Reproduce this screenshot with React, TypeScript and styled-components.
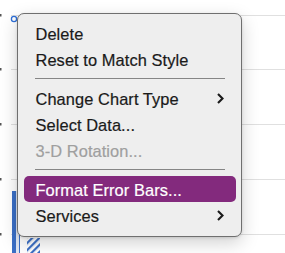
import React from "react";
import styled, { createGlobalStyle } from "styled-components";

const Global = createGlobalStyle`
  html, body { margin: 0; padding: 0; background: #ffffff; }
  body { width: 285px; height: 253px; overflow: hidden; }
`;

const Stage = styled.div`
  position: relative;
  width: 285px;
  height: 253px;
  overflow: hidden;
  background: #ffffff;
`;

const ChartSvg = styled.svg`
  display: block;
`;

const Menu = styled.div`
  position: absolute;
  left: 17px;
  top: 13px;
  width: 225px;
  height: 224px;
  box-sizing: border-box;
  padding: 6px 5px 6px 6px;
  background: #eeeeee;
  border: 1px solid #6f6f6f;
  border-radius: 7px;
  box-shadow: 0 6px 18px rgba(0, 0, 0, 0.18), 0 1px 3px rgba(0, 0, 0, 0.12);
  display: flex;
  flex-direction: column;
  font-family: "Liberation Sans", Arial, sans-serif;
  font-size: 16.4px;
`;

const Item = styled.div<{ $active?: boolean; $disabled?: boolean }>`
  height: 26px;
  box-sizing: border-box;
  padding: 2px 12px 0 11.5px;
  flex: none;
  display: flex;
  align-items: center;
  justify-content: space-between;
  border-radius: 5px;
  background: ${(p) => (p.$active ? "#832a7d" : "transparent")};
  color: ${(p) => (p.$active ? "#ffffff" : p.$disabled ? "#9f9f9f" : "#1a1a1a")};
  letter-spacing: 0.08px;
  white-space: nowrap;
  -webkit-text-stroke: 0.2px currentColor;
`;

const Separator = styled.div`
  height: 13px;
  flex: none;
  display: flex;
  align-items: center;
  padding: 0 11px;
  &::after {
    content: "";
    display: block;
    width: 100%;
    height: 1px;
    background: #858585;
  }
`;

const Chevron = () => (
  <svg width="7" height="11" viewBox="0 0 7 11" style={{ display: "block", marginTop: -2 }}>
    <polyline points="1,1 5.5,5.5 1,10" fill="none" stroke="currentColor" strokeWidth="2.1" strokeLinejoin="miter" />
  </svg>
);

const grid = [15, 69, 124, 179, 234];

export default function App() {
  return (
    <>
      <Global />
      <Stage>
        <ChartSvg width="285" height="253" viewBox="0 0 285 253">
          <defs>
            <pattern id="hatch" width="5" height="5" patternUnits="userSpaceOnUse" patternTransform="rotate(45)">
              <rect x="0" y="0" width="2.2" height="5" fill="#3b6fc6" />
            </pattern>
          </defs>
          {grid.map((y) => (
            <g key={y}>
              <rect x="11" y={y} width="274" height="1" fill="#e0e0e0" />
              <rect x="0" y={y - 1} width="1.5" height="2.5" fill="#555" />
            </g>
          ))}
          <rect x="12" y="191" width="4" height="62" fill="#3b6fc6" />
          <rect x="16" y="191" width="3" height="62" fill="#dfe6f3" />
          <rect x="19" y="191" width="1" height="62" fill="#3b6fc6" />
          <rect x="27" y="238" width="13" height="15" fill="url(#hatch)" />
          <circle cx="14" cy="19" r="2.6" fill="#ffffff" stroke="#2d6fd8" strokeWidth="1.3" />
        </ChartSvg>
        <Menu>
          <Item>Delete</Item>
          <Item>Reset to Match Style</Item>
          <Separator />
          <Item>
            Change Chart Type
            <Chevron />
          </Item>
          <Item>Select Data...</Item>
          <Item $disabled>3-D Rotation...</Item>
          <Separator />
          <Item $active>Format Error Bars...</Item>
          <Item>
            Services
            <Chevron />
          </Item>
        </Menu>
      </Stage>
    </>
  );
}
